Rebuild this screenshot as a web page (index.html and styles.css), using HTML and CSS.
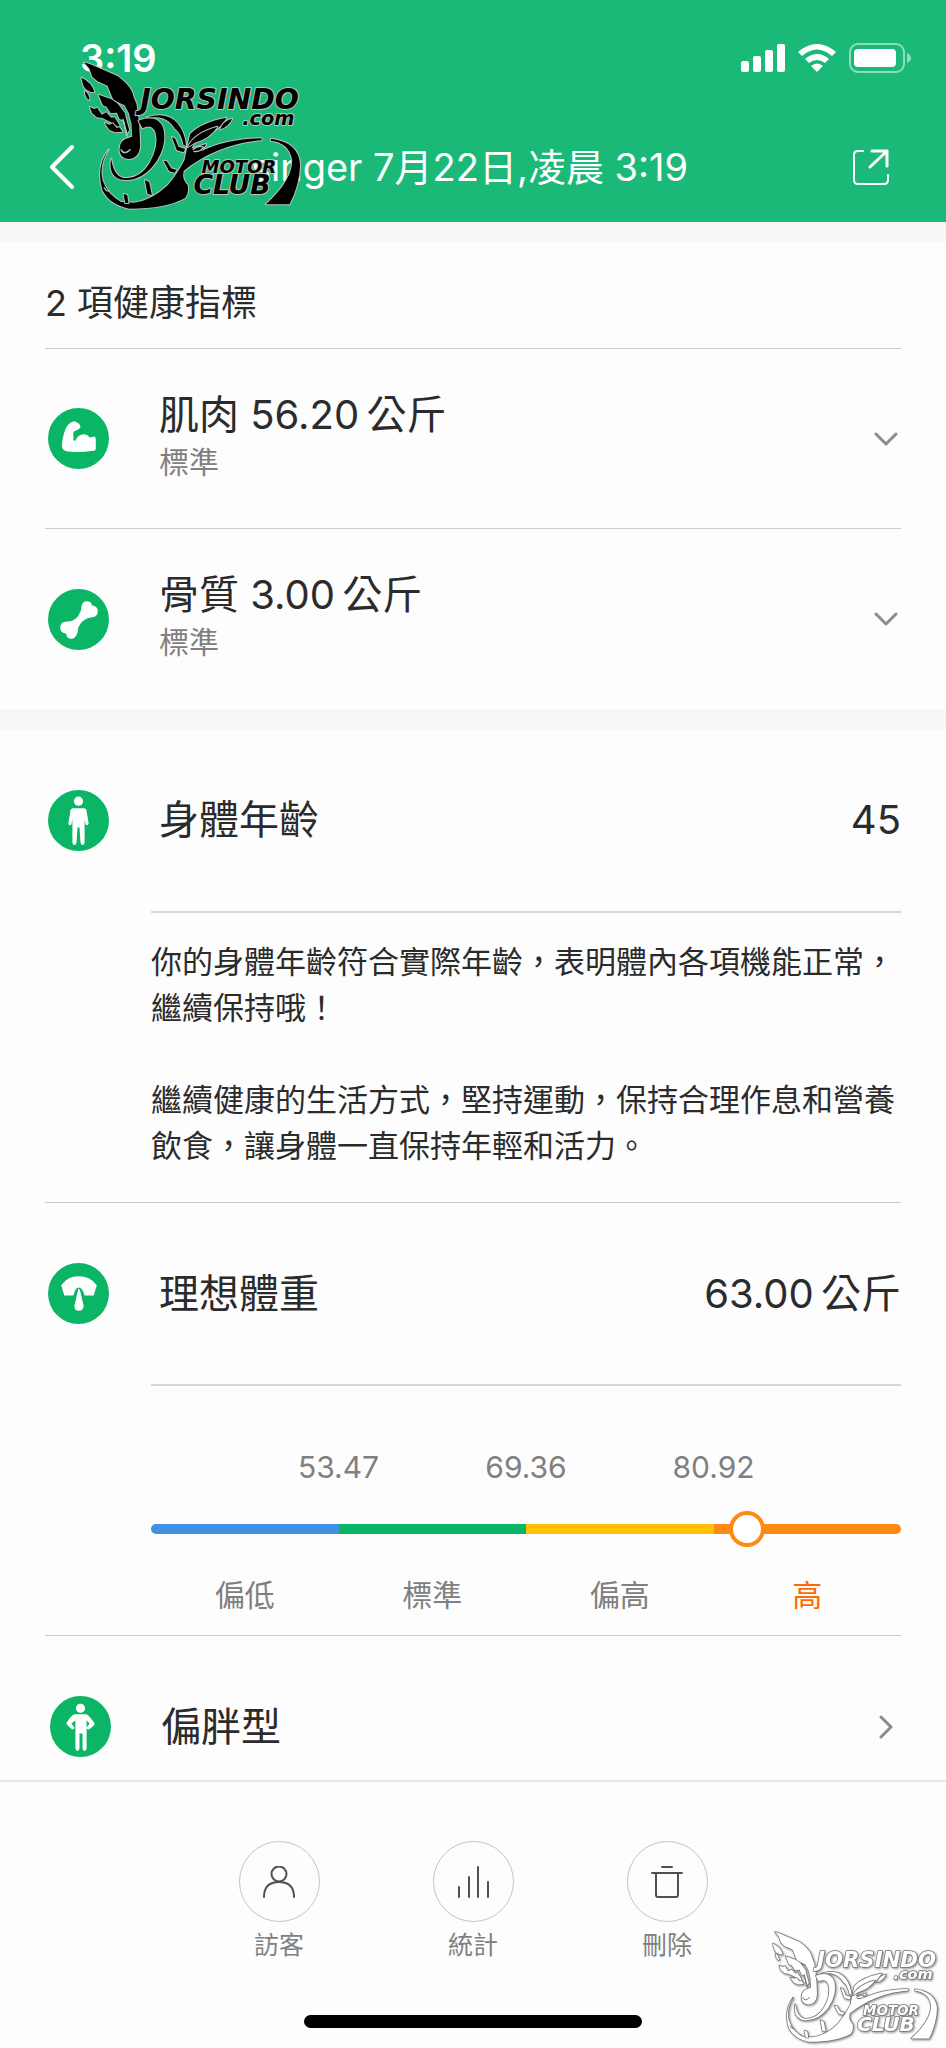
FILE: index.html
```html
<!DOCTYPE html>
<html lang="zh-Hant">
<head>
<meta charset="utf-8">
<meta name="viewport" content="width=device-width, initial-scale=1">
<title>健康指標</title>
<link rel="stylesheet" href="styles.css">
</head>
<body>
<svg class="defs" aria-hidden="true">
  <defs>
    <g id="club-logo">
      <g class="logo-shape">
        <path d="M72 37 L94 44 L172 78 Q206 103 216 126 Q220 142 229 162 L237 218 L240 285 Q238 326 205 327 Q178 324 178 299 Q178 270 204 264 L216 260 L214 222 L206 190 L193 166 L160 151 L142 107 L112 94 L96 80 L88 56 Z"/>
        <path d="M64 83 Q94 96 103 127 Q88 127 77 118 Q67 107 64 83Z"/>
        <path d="M74 123 Q88 133 88 150 Q75 146 74 123Z"/>
        <path d="M115 134 L154 148 L173 161 L194 189 L197 204 L207 240 L199 254 L192 212 L178 207 L170 188 L152 190 L139 170 L128 166 Z"/>
        <path d="M89 171 L102 177 L111 173 L125 194 L138 187 L153 203 L163 202 L178 226 L176 232 L150 215 L126 204 L110 202 L96 190Z"/>
        <path d="M133 219 L148 224 L158 220 L170 234 L178 232 L187 245 L165 247 L148 240Z"/>
        <path d="M235 212 Q290 190 309 233 Q322 286 285 340 Q240 400 178 388 Q144 374 153 326 Q160 374 187 383 Q235 390 267 341 Q297 291 286 247 Q274 220 247 235Z"/>
        <path d="M260 202 Q320 184 352 220 Q373 245 378 287 L370 286 Q363 248 345 237 Q326 206 294 202Z"/>
        <path d="M145 299 Q115 347 128 393 Q141 432 183 456 L221 458 Q275 452 323 405 Q351 373 373 330 L390 252 Q423 217 499 203 Q472 250 423 254 Q404 271 394 296 L438 282 Q423 313 394 320 Q477 266 604 265 L604 271 Q475 281 371 362 Q364 388 382 404 Q388 427 375 444 Q319 476 207 476 Q149 465 127 421 Q106 349 145 299Z"/>
        <path d="M383 291 Q402 249 472 230 Q449 265 404 278Z"/>
        <path d="M480 238 Q488 213 516 206 Q507 229 480 238Z"/>
        <path d="M335 261 L345 266 L355 290 L375 297 L370 307 L350 301Z"/>
        <path d="M310 332 L320 334 L333 355 L350 360 L343 368 L327 364Z"/>
        <path d="M254 390 L267 396 L275 435 L262 432Z M190 432 L201 435 L205 460 L195 459Z"/>
        <path d="M632 266 Q716 276 720 344 Q718 405 688 463 L617 463 Q698 389 696 330 Q687 278 632 272Z"/>
      </g>
      <path class="logo-cut" d="M182 298 Q192 318 211 298 M188 207 L203 261 M398 299 Q419 284 430 292 Q419 307 400 304 M131 412 L139 422 L149 423"/>
    </g>
  </defs>
</svg>

<div class="app">
  <header class="top">
    <div class="status">
      <span class="clock">3:19</span>
      <span class="indicators">
        <svg width="44" height="28" viewBox="0 0 44 28" fill="#fff"><rect x="0" y="17" width="8" height="11" rx="2"/><rect x="12" y="12" width="8" height="16" rx="2"/><rect x="24" y="6" width="8" height="22" rx="2"/><rect x="36" y="0" width="8" height="28" rx="2"/></svg>
        <svg width="38" height="28" viewBox="0 0 38 28" fill="#fff"><path d="M0 8Q19-8 38 8L34 12Q19-1 4 12Z"/><path d="M7 15Q19 5 31 15L27 19Q19 13 11 19Z"/><path d="M13 22Q19 17 25 22L19 28Z"/></svg>
        <svg width="62" height="30" viewBox="0 0 62 30"><rect x="1" y="1" width="54" height="28" rx="8" fill="none" stroke="#fff" stroke-opacity=".5" stroke-width="2"/><rect x="5" y="6" width="42" height="18" rx="4" fill="#fff"/><path d="M58 10Q62 12 62 15Q62 18 58 20Z" fill="#fff" fill-opacity=".5"/></svg>
      </span>
    </div>
    <div class="nav">
      <button class="nav-btn" aria-label="返回"><svg width="24" height="44" viewBox="0 0 24 44" fill="none" stroke="#fff" stroke-width="4" stroke-linecap="round" stroke-linejoin="round"><path d="M22 2L2 22L22 42"/></svg></button>
      <h1 class="nav-title">singer 7月22日,凌晨 3:19</h1>
      <button class="nav-btn" aria-label="分享"><svg width="36" height="36" viewBox="0 0 36 36" fill="none" stroke="#fff" stroke-width="2" stroke-linecap="round" stroke-linejoin="round"><path d="M10 2H5Q1 2 1 6V31Q1 35 5 35H31Q35 35 35 31V26"/><path stroke-width="3" d="M19 2H34V17M34 2L17 18"/></svg></button>
    </div>
    <svg class="mark mark-top" viewBox="60 30 680 450" role="img" aria-label="Jorsindo Motor Club">
      <use href="#club-logo"/>
      <g class="logo-type">
        <text x="240" y="178" font-size="85">JORSINDO</text>
        <text x="546" y="225" font-size="58">.com</text>
        <text x="424" y="370" font-size="54">MOTOR</text>
        <text x="400" y="433" font-size="80">CLUB</text>
      </g>
    </svg>
  </header>

  <main class="content">
    <section class="card">
      <h2 class="card-title">2 項健康指標</h2>
      <button class="row ruled">
        <svg class="badge" viewBox="0 0 60 60"><circle cx="30" cy="30" r="30"/><path class="glyph" d="M16 24Q19 14 26 13Q32 15 32 19Q31 21 28 22Q24 23 25 27V31Q25 33 27 32Q30 25 37 26Q40 27 41 29L46 28Q47 29 47 31V40Q47 42 44 42Q33 44 23 43Q15 43 14 39Q13 34 16 24Z"/></svg>
        <span class="stack"><span class="name">肌肉 56.20&thinsp;公斤</span><span class="note">標準</span></span>
        <svg class="chevron" width="24" height="14" viewBox="0 0 24 14"><path d="M2 2L12 12L22 2"/></svg>
      </button>
      <button class="row">
        <svg class="badge" viewBox="0 0 60 60"><circle cx="30" cy="30" r="30"/><path class="glyph" d="M33 17Q34 12 38 12Q43 12 43 16Q49 17 49 22Q49 28 42 28Q36 29 32 34Q29 38 29 43Q27 49 23 49Q18 49 18 44Q12 43 12 38Q12 32 19 32Q26 32 30 26Q33 21 33 17Z"/></svg>
        <span class="stack"><span class="name">骨質 3.00&thinsp;公斤</span><span class="note">標準</span></span>
        <svg class="chevron" width="24" height="14" viewBox="0 0 24 14"><path d="M2 2L12 12L22 2"/></svg>
      </button>
    </section>

    <section class="card">
      <div class="row tall">
        <svg class="badge" viewBox="0 0 60 60"><circle cx="30" cy="30" r="30"/><circle class="glyph" cx="30" cy="11" r="4.500"/><path class="glyph" d="M25 18H35Q38 18 38 21L40 33Q39 36 37 34L36 29V52Q36 54 34 54Q32 54 32 52L31 37H29L28 52Q28 54 26 54Q24 54 24 52V29L23 34Q21 36 20 33L22 21Q22 18 25 18Z"/></svg>
        <h2 class="name">身體年齡</h2>
        <span class="value">45</span>
      </div>
      <div class="detail advice">
        <p>你的身體年齡符合實際年齡，表明體內各項機能正常，繼續保持哦！</p>
        <p>繼續健康的生活方式，堅持運動，保持合理作息和營養飲食，讓身體一直保持年輕和活力。</p>
      </div>

      <div class="row tall topped">
        <svg class="badge" viewBox="0 0 60 60"><circle cx="30" cy="30" r="30"/><path class="glyph" d="M13 22Q19 13 30 13Q42 13 48 22L45 32H36Q34 24 30 24Q27 24 25 32H16Z"/><path class="glyph" d="M30 25Q31 25 32 29L35 42Q35 47 30 47Q26 47 26 42L29 29Q30 25 30 25Z"/></svg>
        <h2 class="name">理想體重</h2>
        <span class="value">63.00&thinsp;公斤</span>
      </div>
      <div class="detail gauge">
        <div class="limits"><span>53.47</span><span>69.36</span><span>80.92</span></div>
        <div class="scale"><i class="low"></i><i class="ok"></i><i class="over"></i><i class="high"></i><b class="knob" style="left:79.5%"></b></div>
        <div class="zones"><span>偏低</span><span>標準</span><span>偏高</span><span class="current">高</span></div>
      </div>

      <button class="row tall topped figure">
        <svg class="badge" viewBox="0 0 60 60"><circle cx="30" cy="30" r="30"/><circle class="glyph" cx="30" cy="12" r="4.500"/><path class="glyph" d="M24 18H36Q39 20 44 27Q44 29 38 33Q36 33 36 31L39 27L36 24V51Q36 54 34 54Q32 54 32 51V37H29V51Q29 54 27 54Q25 54 25 51V24L21 27L24 31Q24 33 22 33Q17 29 16 27Q20 20 24 18Z"/></svg>
        <span class="name">偏胖型</span>
        <svg class="chevron" width="14" height="24" viewBox="0 0 14 24"><path d="M2 2L12 12L2 22"/></svg>
      </button>
    </section>
  </main>

  <footer class="bottom">
    <nav class="actions">
      <button class="action"><span class="ring"><svg width="32" height="32" viewBox="0 0 32 32"><circle cx="16" cy="8" r="7.500"/><path d="M1 31Q1 16 16 16Q31 16 31 31"/></svg></span>訪客</button>
      <button class="action"><span class="ring"><svg width="32" height="32" viewBox="0 0 32 32"><path d="M2 21V31M12 11V31M21 1V31M31 16V31"/></svg></span>統計</button>
      <button class="action"><span class="ring"><svg width="32" height="34" viewBox="0 0 32 34"><path d="M11 2H21M1 8H31M5 8V30Q5 32 7 32H25Q27 32 27 30V8"/></svg></span>刪除</button>
    </nav>
    <div class="home-bar"></div>
    <svg class="mark mark-bottom" viewBox="60 30 680 450" role="img" aria-label="Jorsindo Motor Club">
      <use href="#club-logo"/>
      <g class="logo-type">
        <text x="240" y="178" font-size="85">JORSINDO</text>
        <text x="546" y="225" font-size="58">.com</text>
        <text x="424" y="370" font-size="54">MOTOR</text>
        <text x="400" y="433" font-size="80">CLUB</text>
      </g>
    </svg>
  </footer>
</div>
</body>
</html>
```

FILE: styles.css
```css
* {
  box-sizing: border-box;
}

body {
  margin: 0;
  background: #fdfdfd;
  color: #2b2b2b;
  font-family: Inter, "Noto Sans CJK TC", sans-serif;
}

h1,
h2,
p {
  margin: 0;
  font-weight: 400;
}

button {
  border: 0;
  padding: 0;
  background: none;
  color: inherit;
  font: inherit;
  text-align: left;
  cursor: pointer;
}

svg {
  display: block;
  flex: none;
}

.defs {
  position: absolute;
  width: 0;
  height: 0;
}

.app {
  display: flex;
  flex-direction: column;
  height: 100vh;
}

/* Header */
.top {
  position: relative;
  flex: none;
  background: #1ab978;
  color: #fff;
}

.status {
  display: flex;
  align-items: center;
  justify-content: space-between;
  height: 116px;
  padding: 0 35px 0 80px;
}

.clock {
  font-size: 38px;
  font-weight: 600;
}

.indicators {
  display: flex;
  align-items: center;
  gap: 13px;
}

.nav {
  display: grid;
  grid-template-columns: 1fr auto 1fr;
  align-items: center;
  height: 106px;
  padding: 0 57px 4px 50px;
}

.nav-btn:last-child {
  justify-self: end;
}

.nav-title {
  font-size: 38px;
  line-height: 56px;
}

.mark {
  position: absolute;
}

.mark-top {
  top: 60px;
  left: 80px;
  width: 227px;
  height: 150px;
  color: #000;
  stroke: #b9c4bd;
}

.mark-bottom {
  right: 4px;
  bottom: 5px;
  width: 170px;
  height: 113px;
  color: #fff;
  stroke: #777;
  filter: drop-shadow(1px 1px 1px #888);
}

.logo-shape,
.logo-type {
  fill: currentColor;
  stroke-width: 6;
  stroke-linejoin: round;
  paint-order: stroke;
}

.logo-cut {
  fill: none;
  stroke-width: 4;
}

.logo-type {
  font-family: "DejaVu Sans", sans-serif;
  font-weight: 700;
  font-style: italic;
}

/* Cards */
.content {
  flex: 1;
  min-height: 0;
  overflow-y: auto;
  scrollbar-width: none;
}

.card {
  padding: 0 45px;
  border-top: 20px solid #f7f7f7;
}

.card-title {
  padding: 37px 0 21px;
  border-bottom: 1px solid #ccc;
  font-size: 36px;
  line-height: 48px;
}

.row {
  display: flex;
  align-items: center;
  width: 100%;
  height: 180px;
  padding: 0 0 0 3px;
}

.tall {
  height: 182px;
}

.ruled {
  border-bottom: 1px solid #ccc;
}

.topped {
  border-top: 1px solid #ccc;
}

.badge {
  width: 61px;
  height: 61px;
  margin-right: 50px;
  fill: #0ab565;
}

.glyph {
  fill: #fff;
}

.stack {
  display: flex;
  flex-direction: column;
  padding-bottom: 4px;
}

.name,
.value {
  font-size: 40px;
  line-height: 50px;
}

.note {
  color: #808080;
  font-size: 30px;
  line-height: 44px;
}

.value {
  margin-left: auto;
}

.chevron {
  margin: 0 3px 0 auto;
  fill: none;
  stroke: #8c8c8c;
  stroke-width: 3;
  stroke-linecap: round;
  stroke-linejoin: round;
}

.figure {
  padding: 0 5px;
}

.detail {
  margin-left: 106px;
  border-top: 2px solid #d5d7d9;
}

.advice {
  padding: 26px 0 33px;
  font-size: 31px;
  line-height: 46px;
}

.advice p + p {
  margin-top: 46px;
}

/* Weight gauge */
.gauge {
  padding: 59px 0 18px;
  color: #808080;
  font-size: 30px;
  line-height: 44px;
  text-align: center;
}

.limits {
  display: grid;
  grid-template-columns: repeat(3, 1fr);
  margin: 0 12.5%;
}

.scale {
  position: relative;
  display: flex;
  height: 10px;
  margin: 35px 0 39px;
}

.scale i {
  flex: 1;
}

.low {
  border-radius: 5px 0 0 5px;
  background: #4290e2;
}

.ok {
  background: #0ab565;
}

.over {
  background: #ffc107;
}

.high {
  border-radius: 0 5px 5px 0;
  background: #ff8a12;
}

.knob {
  position: absolute;
  top: 50%;
  width: 36px;
  height: 36px;
  border: 4px solid #ff8a12;
  border-radius: 50%;
  background: #fff;
  transform: translate(-50%, -50%);
}

.zones {
  display: grid;
  grid-template-columns: repeat(4, 1fr);
}

.current {
  color: #ff6a00;
}

/* Bottom actions */
.bottom {
  position: relative;
  flex: none;
  padding: 59px 0 20px;
  border-top: 2px solid #e8e8e8;
}

.actions {
  display: flex;
  justify-content: center;
  gap: 113px;
}

.action {
  display: flex;
  flex-direction: column;
  align-items: center;
  gap: 5px;
  color: #808080;
  font-size: 25px;
  line-height: 36px;
}

.ring {
  display: grid;
  place-items: center;
  width: 81px;
  height: 81px;
  border: 1px solid #c4c4c4;
  border-radius: 50%;
  fill: none;
  stroke: #505050;
  stroke-width: 2;
  stroke-linecap: round;
}

.home-bar {
  width: 338px;
  height: 13px;
  margin: 52px auto 0;
  border-radius: 7px;
  background: #000;
}
```
